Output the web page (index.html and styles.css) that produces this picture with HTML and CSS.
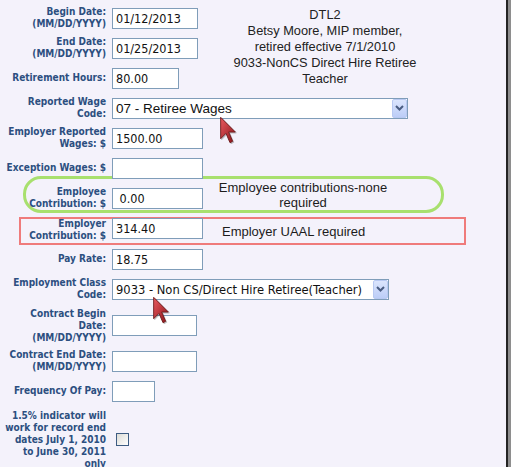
FILE: index.html
```html
<!DOCTYPE html>
<html>
<head>
<meta charset="utf-8">
<link rel="stylesheet" href="styles.css">
</head>
<body>
<div class="page">
  <div class="green-box"></div>
  <div class="red-box"></div>

  <div class="form">
    <label class="lbl">Begin Date:<br>(MM/DD/YYYY)</label>
    <div class="fld"><input class="txt w86" value="01/12/2013"></div>
    <div class="info">DTL2<br>Betsy Moore, MIP member,<br>retired effective 7/1/2010<br>9033-NonCS Direct Hire Retiree<br>Teacher</div>

    <label class="lbl">End Date:<br>(MM/DD/YYYY)</label>
    <div class="fld"><input class="txt w86" value="01/25/2013"></div>

    <label class="lbl">Retirement Hours:</label>
    <div class="fld"><input class="txt w67" value="80.00"></div>

    <label class="lbl">Reported Wage<br>Code:</label>
    <div class="fld wide">
      <div class="select w296">
        <span class="sel-text arial">07 - Retiree Wages</span>
        <span class="sel-btn"><svg width="9" height="6" viewBox="0 0 9 6"><polyline points="1,1 4.5,4.5 8,1" fill="none" stroke="#4a5d82" stroke-width="2"/></svg></span>
      </div>
    </div>

    <label class="lbl">Employer Reported<br>Wages: $</label>
    <div class="fld"><input class="txt w91" value="1500.00"></div>

    <label class="lbl">Exception Wages: $</label>
    <div class="fld"><input class="txt w91" value=""></div>

    <label class="lbl">Employee<br>Contribution: $</label>
    <div class="fld"><input class="txt w91" value=" 0.00"></div>

    <label class="lbl low">Employer<br>Contribution: $</label>
    <div class="fld"><input class="txt w91" value="314.40"></div>

    <label class="lbl">Pay Rate:</label>
    <div class="fld"><input class="txt w91" value="18.75"></div>

    <label class="lbl">Employment Class<br>Code:</label>
    <div class="fld wide">
      <div class="select w277">
        <span class="sel-text">9033 - Non CS/Direct Hire Retiree(Teacher)</span>
        <span class="sel-btn"><svg width="9" height="6" viewBox="0 0 9 6"><polyline points="1,1 4.5,4.5 8,1" fill="none" stroke="#4a5d82" stroke-width="2"/></svg></span>
      </div>
    </div>

    <label class="lbl pad">Contract Begin<br>Date:<br>(MM/DD/YYYY)</label>
    <div class="fld"><input class="txt w85" value=""></div>

    <label class="lbl">Contract End Date:<br>(MM/DD/YYYY)</label>
    <div class="fld"><input class="txt w85" value=""></div>

    <label class="lbl">Frequency Of Pay:</label>
    <div class="fld"><input class="txt w43" value=""></div>

    <label class="lbl pad">1.5% indicator will<br>work for record end<br>dates July 1, 2010<br>to June 30, 2011<br>only</label>
    <div class="fld"><span class="chk"></span></div>
  </div>

  <div class="note note-green">Employee contributions-none<br>required</div>
  <div class="note note-red">Employer UAAL required</div>

  <svg class="cursor c1" width="18" height="28" viewBox="0 0 13 21">
    <defs>
      <linearGradient id="cg1" x1="0" y1="0" x2="1" y2="1">
        <stop offset="0" stop-color="#ea5a60"/>
        <stop offset="1" stop-color="#8a1218"/>
      </linearGradient>
    </defs>
    <path d="M1 1 L1 17 L5 13 L8 20 L10 19 L7 12 L12 12 Z" fill="url(#cg1)" stroke="#6e1c1c" stroke-width="0.7" stroke-linejoin="round"/>
  </svg>
  <svg class="cursor c2" width="18" height="28" viewBox="0 0 13 21">
    <path d="M1 1 L1 17 L5 13 L8 20 L10 19 L7 12 L12 12 Z" fill="url(#cg1)" stroke="#6e1c1c" stroke-width="0.7" stroke-linejoin="round"/>
  </svg>
</div>
</body>
</html>
```

FILE: styles.css
```css
html, body {
  margin: 0;
  padding: 0;
  overflow: hidden;
  background: #8e8e8e;
}

.page {
  position: relative;
  width: 508px;
  height: 467px;
  box-sizing: border-box;
  border-right: 2px solid #232323;
  background: #f4f2fb;
  overflow: hidden;
}

.form {
  position: relative;
  display: grid;
  grid-template-columns: 112px 91px 244px;
  grid-auto-rows: minmax(26px, auto);
  row-gap: 4px;
  padding-top: 5px;
  align-items: center;
}

.lbl {
  grid-column: 1;
  text-align: right;
  padding-right: 6px;
  font-family: "DejaVu Sans Condensed", "DejaVu Sans", sans-serif;
  font-stretch: condensed;
  font-weight: bold;
  font-size: 10px;
  line-height: 12px;
  color: #2c4f80;
}

.lbl.pad {
  padding-top: 2px;
}

.lbl.low {
  padding-top: 3px;
}

.fld {
  grid-column: 2;
  display: flex;
  align-items: center;
}

.fld.wide {
  grid-column: 2 / 4;
}

.txt {
  height: 21px;
  box-sizing: border-box;
  margin: 0;
  border: 1px solid #7f9db9;
  background: #fff;
  padding: 0 3px;
  font-family: "DejaVu Sans Condensed", "DejaVu Sans", sans-serif;
  font-stretch: condensed;
  font-size: 12.5px;
  color: #111;
  outline: none;
}

.w86 { width: 86px; }
.w67 { width: 67px; }
.w91 { width: 91px; }
.w85 { width: 85px; }
.w43 { width: 43px; }
.w296 { width: 296px; }
.w277 { width: 277px; }

.select {
  height: 21px;
  box-sizing: border-box;
  border: 1px solid #7f9db9;
  background: #fff;
  display: flex;
  align-items: center;
  justify-content: space-between;
}

.sel-text {
  padding-left: 3px;
  font-family: "DejaVu Sans Condensed", "DejaVu Sans", sans-serif;
  font-stretch: condensed;
  font-size: 12.8px;
  color: #111;
  white-space: nowrap;
}

.sel-text.arial {
  font-family: "Liberation Sans", Arial, sans-serif;
  font-stretch: normal;
  font-size: 13.5px;
}

.sel-btn {
  width: 15px;
  height: 19px;
  box-sizing: border-box;
  border: 1px solid #b8c9f2;
  border-radius: 2px;
  background: linear-gradient(#dbe5fd, #bccdf7);
  display: flex;
  align-items: center;
  justify-content: center;
}

.chk {
  width: 13px;
  height: 13px;
  box-sizing: border-box;
  margin-left: 4px;
  border: 1px solid #3d5c82;
  background: linear-gradient(135deg, #dcdcd6, #ffffff);
}

.info {
  grid-column: 3;
  grid-row: 1 / span 3;
  align-self: start;
  padding-top: 2px;
  text-align: center;
  font-family: "Liberation Sans", Arial, sans-serif;
  font-size: 12.8px;
  line-height: 16px;
  color: #222;
}

.green-box {
  position: absolute;
  left: 23px;
  top: 176px;
  width: 421px;
  height: 37px;
  box-sizing: border-box;
  border: 3px solid #a8e06e;
  border-radius: 18px;
}

.red-box {
  position: absolute;
  left: 19px;
  top: 217px;
  width: 447px;
  height: 28px;
  box-sizing: border-box;
  border: 2px solid #ef7b7b;
}

.note {
  position: absolute;
  font-family: "Liberation Sans", Arial, sans-serif;
  font-size: 13px;
  line-height: 15px;
  color: #1c1c1c;
}

.note-green {
  left: 203px;
  width: 200px;
  top: 180px;
  text-align: center;
}

.note-red {
  left: 222px;
  top: 224px;
  line-height: 16px;
}

.cursor {
  position: absolute;
  filter: drop-shadow(1px 1px 0 rgba(0, 0, 0, 0.25));
}

.c1 { left: 219px; top: 116px; }
.c2 { left: 152px; top: 296px; }
```
